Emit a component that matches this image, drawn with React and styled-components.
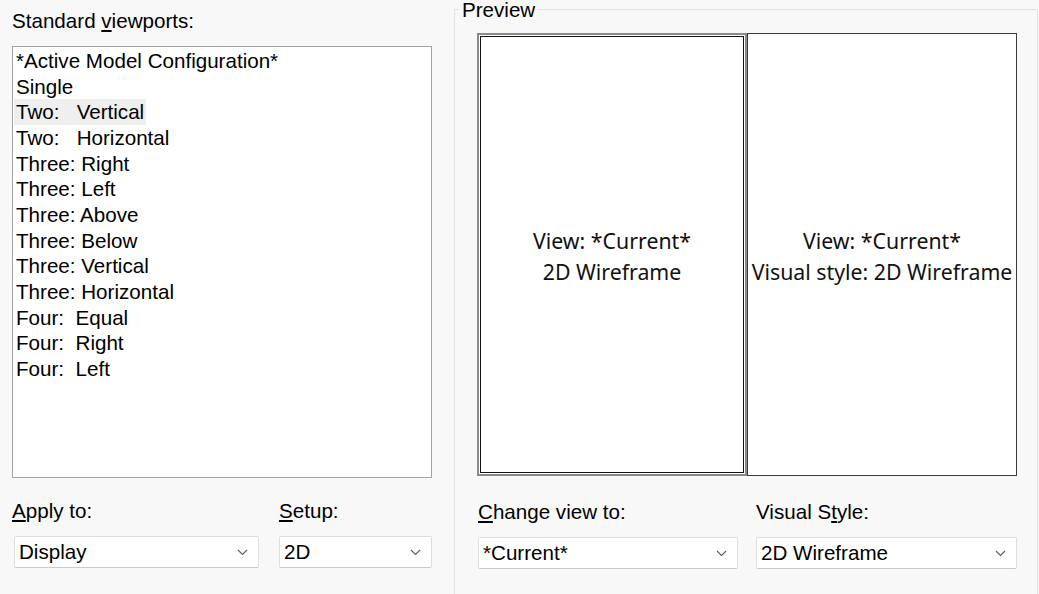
import styled, { createGlobalStyle } from 'styled-components';

const GlobalStyle = createGlobalStyle`
  html, body {
    margin: 0;
    padding: 0;
    background: #f8f8f8;
  }
  * {
    box-sizing: border-box;
  }
`;

const Dialog = styled.div`
  display: flex;
  width: 1039px;
  height: 594px;
  overflow: hidden;
  background: #f8f8f8;
  font-family: 'Liberation Sans', Arial, sans-serif;
  font-size: 20.6px;
  color: #000;
`;

const LeftColumn = styled.div`
  display: flex;
  flex-direction: column;
  width: 420px;
  margin-left: 12px;
  padding-top: 10px;
`;

const Label = styled.div`
  line-height: 22px;
  white-space: nowrap;
`;

const ListBox = styled.div`
  display: flex;
  flex-direction: column;
  align-items: flex-start;
  height: 432px;
  margin-top: 14px;
  padding-top: 1px;
  background: #fff;
  border: 1px solid #a3a3a3;
`;

const ListItem = styled.div`
  margin-left: 1px;
  padding: 0 2px;
  line-height: 25.67px;
  white-space: pre;
  background: ${(p) => (p.$selected ? '#efefef' : 'transparent')};
`;

const FieldRow = styled.div`
  display: flex;
  gap: ${(p) => p.$gap}px;
  margin-top: ${(p) => p.$top}px;
  padding-left: ${(p) => p.$indent || 0}px;
`;

const Field = styled.div`
  display: flex;
  flex-direction: column;
  gap: 14px;
`;

const Select = styled.div`
  display: flex;
  align-items: center;
  justify-content: space-between;
  width: ${(p) => p.$width}px;
  height: 32px;
  margin-left: ${(p) => p.$shift || 0}px;
  padding: 0 10px 0 4px;
  background: #fff;
  border: 1px solid #dedede;
  border-bottom-color: #cacaca;
  border-radius: 2px;
  white-space: nowrap;
`;

const Group = styled.fieldset`
  width: 584px;
  height: 640px;
  min-width: 0;
  margin: 0 0 0 22px;
  padding: 0;
  border: 1px solid #e3e3e3;
`;

const Legend = styled.legend`
  margin-left: 4px;
  padding: 0 3px;
  line-height: 19px;
`;

const GroupBody = styled.div`
  display: flex;
  flex-direction: column;
  padding: 14px 20px 0 22px;
`;

const Viewports = styled.div`
  display: flex;
  height: 443px;
`;

const Viewport = styled.div`
  display: flex;
  flex-direction: column;
  align-items: center;
  justify-content: center;
  padding-top: 3px;
  width: ${(p) => p.$width}px;
  background: #fff;
  font-family: 'Noto Sans', 'Open Sans', sans-serif;
  font-size: 21.3px;
  line-height: 31px;
  white-space: nowrap;
  color: #111;
  border: ${(p) => (p.$active ? '2px solid #8a8a8a' : '1px solid #3a3a3a')};
  box-shadow: ${(p) => (p.$active ? 'inset 0 0 0 1px #fff, inset 0 0 0 2px #111' : 'none')};
`;

function Chevron() {
  return (
    <svg width="11" height="7" viewBox="0 0 11 7">
      <polyline points="1,1 5.5,5.5 10,1" fill="none" stroke="#5c5c5c" strokeWidth="1.1" />
    </svg>
  );
}

const viewportNames = [
  '*Active Model Configuration*',
  'Single',
  'Two:   Vertical',
  'Two:   Horizontal',
  'Three: Right',
  'Three: Left',
  'Three: Above',
  'Three: Below',
  'Three: Vertical',
  'Three: Horizontal',
  'Four:  Equal',
  'Four:  Right',
  'Four:  Left',
];

function App() {
  return (
    <>
      <GlobalStyle />
      <Dialog>
        <LeftColumn>
          <Label>
            Standard <u>v</u>iewports:
          </Label>
          <ListBox>
            {viewportNames.map((name) => (
              <ListItem key={name} $selected={name === 'Two:   Vertical'}>
                {name}
              </ListItem>
            ))}
          </ListBox>
          <FieldRow $gap={20} $top={22}>
            <Field>
              <Label>
                <u>A</u>pply to:
              </Label>
              <Select $width={245} $shift={2}>
                Display
                <Chevron />
              </Select>
            </Field>
            <Field>
              <Label>
                <u>S</u>etup:
              </Label>
              <Select $width={153}>
                2D
                <Chevron />
              </Select>
            </Field>
          </FieldRow>
        </LeftColumn>

        <Group>
          <Legend>Preview</Legend>
          <GroupBody>
            <Viewports>
              <Viewport $active $width={270}>
                <span>View: *Current*</span>
                <span>2D Wireframe</span>
              </Viewport>
              <Viewport $width={270}>
                <span>View: *Current*</span>
                <span>Visual style: 2D Wireframe</span>
              </Viewport>
            </Viewports>
            <FieldRow $gap={18} $top={25} $indent={1}>
              <Field>
                <Label>
                  <u>C</u>hange view to:
                </Label>
                <Select $width={260}>
                  *Current*
                  <Chevron />
                </Select>
              </Field>
              <Field>
                <Label>
                  Visual S<u>t</u>yle:
                </Label>
                <Select $width={261}>
                  2D Wireframe
                  <Chevron />
                </Select>
              </Field>
            </FieldRow>
          </GroupBody>
        </Group>
      </Dialog>
    </>
  );
}

export default App;
